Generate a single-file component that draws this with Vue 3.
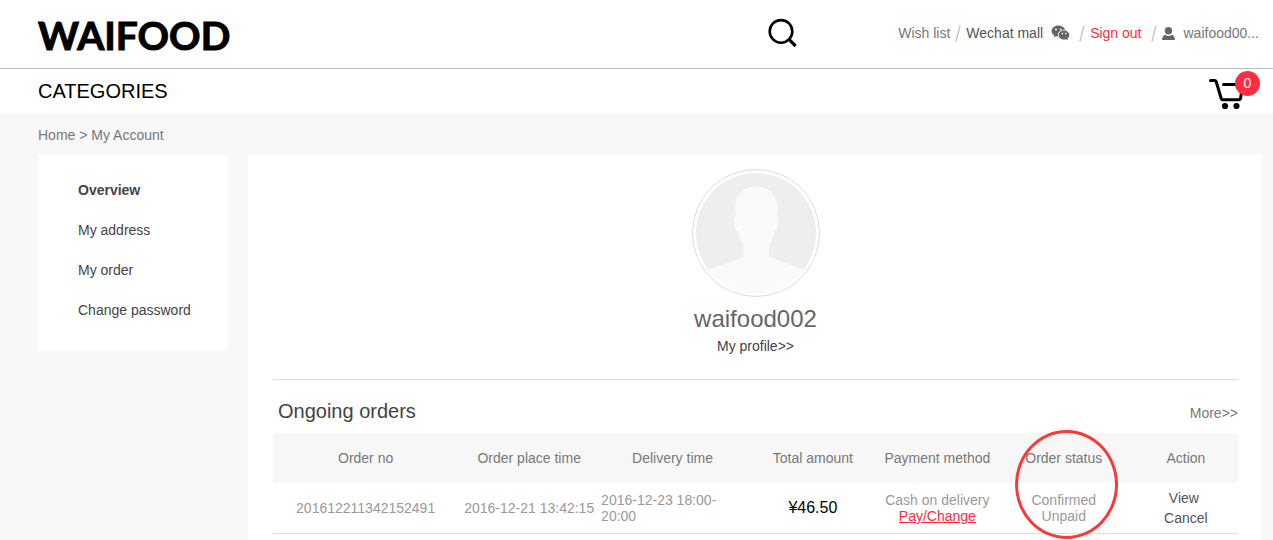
<script setup>
import { ref } from 'vue'

const menu = ref([
  { label: 'Overview', active: true },
  { label: 'My address' },
  { label: 'My order' },
  { label: 'Change password' },
])

const orders = ref([
  {
    no: '201612211342152491',
    placed: '2016-12-21 13:42:15',
    delivery: '2016-12-23 18:00-20:00',
    total: '¥46.50',
    payment: 'Cash on delivery',
    status: ['Confirmed', 'Unpaid'],
  },
])
</script>

<template>
  <div class="page">
    <header class="top">
      <a class="logo" href="#">WAIFOOD</a>
      <button class="search" type="button" aria-label="Search">
        <svg width="30" height="30" viewBox="0 0 30 30" fill="none" stroke="#000">
          <circle cx="13" cy="13.4" r="11.3" stroke-width="2.6" />
          <path d="M21 21.4 L27.6 28" stroke-width="3.2" />
        </svg>
      </button>
      <nav class="links" aria-label="Account">
        <a class="wish" href="#">Wish list</a>
        <svg class="slash" width="6" height="17" viewBox="0 0 6 17"><path d="M5 .5 1 16.5" stroke="#c8c8c8" stroke-width="1.5" /></svg>
        <a class="wechat" href="#">
          <span>Wechat mall</span>
          <svg width="19" height="16" viewBox="0 0 19 16">
            <path fill="#666" d="M7.4.6C3.6.6.6 3 .6 6.1c0 1.800 1 3.300 2.600 4.300l-.7 2 2.400-1.200c.9.200 1.600.4 2.500.4C11.200 11.600 14.200 9.200 14.200 6.100S11.200.6 7.400.6z" />
            <ellipse cx="13" cy="10" rx="6.200" ry="5.300" fill="#fff" />
            <path fill="#666" d="M13 5.400c-3 0-5.300 2-5.300 4.500s2.300 4.600 5.300 4.600c.7 0 1.300-.1 1.900-.3l2 1-.5-1.700c1.200-.8 1.900-2.100 1.900-3.600 0-2.500-2.300-4.500-5.300-4.500z" />
            <g fill="#fff">
              <circle cx="5" cy="4.400" r=".9" />
              <circle cx="9.700" cy="4.400" r=".9" />
              <circle cx="11.300" cy="8.600" r=".8" />
              <circle cx="14.900" cy="8.600" r=".8" />
            </g>
          </svg>
        </a>
        <svg class="slash wide" width="6" height="17" viewBox="0 0 6 17"><path d="M5 .5 1 16.5" stroke="#c8c8c8" stroke-width="1.5" /></svg>
        <a class="signout" href="#">Sign out</a>
        <svg class="slash wide" width="6" height="17" viewBox="0 0 6 17"><path d="M5 .5 1 16.5" stroke="#c8c8c8" stroke-width="1.5" /></svg>
        <a class="user" href="#">
          <svg width="13" height="13" viewBox="0 0 13 13" fill="#666">
            <circle cx="6.500" cy="3.800" r="3.700" />
            <path d="M0 13c.1-2.500 1-4.500 3.100-5.200C4 8.600 5.200 9 6.500 9s2.500-.4 3.400-1.200C12 8.500 12.900 10.500 13 13z" />
          </svg>
          <span>waifood00...</span>
        </a>
      </nav>
    </header>

    <div class="bar">
      <a class="categories" href="#">CATEGORIES</a>
      <button class="cart" type="button" aria-label="Cart">
        <svg width="36" height="32" viewBox="0 0 36 32" fill="none" stroke="#000" stroke-width="3" stroke-linecap="round" stroke-linejoin="round">
          <path d="M2.500 2.500h4.200c.8 0 1.200.4 1.500 1.200l5 16.800c.3.900.8 1.200 1.600 1.200H31c.9 0 1.400-.4 1.600-1.300L34.500 7" />
          <path d="M15.500 6.500H30" />
          <circle cx="17" cy="28" r="3.100" fill="#000" stroke="none" />
          <circle cx="28.500" cy="28" r="3.100" fill="#000" stroke="none" />
        </svg>
        <span class="badge">0</span>
      </button>
    </div>

    <nav class="crumbs" aria-label="Breadcrumb">
      <a href="#">Home</a> &gt; <a href="#">My Account</a>
    </nav>

    <div class="body">
      <aside class="side">
        <ul>
          <li v-for="item in menu" :key="item.label">
            <a href="#" :class="{ active: item.active }">{{ item.label }}</a>
          </li>
        </ul>
      </aside>

      <main class="panel">
        <section class="profile">
          <div class="avatar">
            <svg viewBox="0 0 120 120" aria-hidden="true">
              <defs>
                <clipPath id="disc"><circle cx="60" cy="60" r="60" /></clipPath>
              </defs>
              <g clip-path="url(#disc)">
                <rect width="120" height="120" fill="#eee" />
                <path
                  fill="#fafafa"
                  d="M60 13.500C47 13.500 39 22 39 34c0 3.500.3 6.500.8 9-1.800.8-1.800 3-1.600 6 .3 4.500 1 8.500 3.800 9.200 1 5.500 2.500 10 5.500 13.800V83c-7 4-14 6.500-21 9-5 1.800-9 2-13 4.500L8 120h104l-5-23.500c-4-2.500-8-3-13-5-7-2.700-14-4.500-21-8.500V72c3-3.800 4.500-8.300 5.500-13.800 2.800-.7 3.500-4.700 3.700-9.200.2-3 .2-5.200-1.500-6 .5-2.500.8-5.500.8-9C81.500 22 73 13.500 60 13.500z"
                />
              </g>
            </svg>
          </div>
          <h1>waifood002</h1>
          <a href="#">My profile&gt;&gt;</a>
        </section>

        <section class="orders">
          <div class="heading">
            <h2>Ongoing orders</h2>
            <a href="#">More&gt;&gt;</a>
          </div>
          <table>
            <colgroup>
              <col class="c-no" />
              <col class="c-placed" />
              <col class="c-delivery" />
              <col class="c-total" />
              <col class="c-payment" />
              <col class="c-status" />
              <col class="c-action" />
            </colgroup>
            <thead>
              <tr>
                <th>Order no</th>
                <th>Order place time</th>
                <th>Delivery time</th>
                <th>Total amount</th>
                <th>Payment method</th>
                <th class="status">Order status<span class="ring"></span></th>
                <th>Action</th>
              </tr>
            </thead>
            <tbody>
              <tr v-for="order in orders" :key="order.no">
                <td>{{ order.no }}</td>
                <td>{{ order.placed }}</td>
                <td class="delivery">{{ order.delivery }}</td>
                <td class="total">{{ order.total }}</td>
                <td>{{ order.payment }}<br /><a class="pay" href="#">Pay/Change</a></td>
                <td><div v-for="line in order.status" :key="line">{{ line }}</div></td>
                <td class="actions">
                  <a class="view" href="#">View</a>
                  <a href="#">Cancel</a>
                </td>
              </tr>
            </tbody>
          </table>
        </section>
      </main>
    </div>
  </div>
</template>

<style>
body {
  margin: 0;
}
</style>

<style scoped>
.page {
  display: flex;
  flex-direction: column;
  box-sizing: border-box;
  min-height: 100vh;
  background: #f8f8f8;
  color: #777;
  font: 14px/16px "Liberation Sans", Arial, sans-serif;
}
a {
  color: inherit;
  text-decoration: none;
}
button {
  padding: 0;
  border: 0;
  background: none;
  cursor: pointer;
}
svg {
  display: block;
  flex: none;
}
.top {
  display: flex;
  align-items: center;
  box-sizing: border-box;
  height: 69px;
  padding: 0 14px 2px 38px;
  background: #fff;
  border-bottom: 1px solid #bcbcc0;
}
.logo {
  padding-top: 4px;
  color: #000;
  font: bold 39px/48px Lato, sans-serif;
  -webkit-text-stroke: 1px #000;
}
.search {
  margin-left: auto;
}
.links {
  display: flex;
  align-items: center;
  margin-left: 100px;
  white-space: nowrap;
}
.slash {
  margin: 0 5px;
}
.slash.wide {
  margin-left: 9px;
}
.wechat {
  display: flex;
  align-items: center;
  gap: 8px;
  color: #555;
}
.signout {
  color: #ff2d3f;
}
.user {
  display: flex;
  align-items: center;
  gap: 9px;
}
.bar {
  display: flex;
  align-items: center;
  justify-content: space-between;
  height: 44px;
  padding: 0 29px 0 38px;
  background: #fff;
}
.categories {
  color: #000;
  font-size: 20px;
  line-height: 24px;
}
.cart {
  position: relative;
  margin-top: 6px;
}
.badge {
  position: absolute;
  top: -7px;
  right: -16px;
  width: 25px;
  border-radius: 50%;
  background: #ff2d3f;
  color: #fff;
  font: 14px/25px "Liberation Sans", Arial, sans-serif;
  text-align: center;
}
.crumbs {
  padding: 14px 38px 12px;
}
.body {
  display: flex;
  flex: 1;
  align-items: stretch;
  gap: 20px;
  padding: 0 11px 0 38px;
}
.side {
  flex: none;
  align-self: flex-start;
  box-sizing: border-box;
  width: 190px;
  padding: 15px 0 21px 40px;
  background: #fff;
  color: #444;
}
.side ul {
  margin: 0;
  padding: 0;
  list-style: none;
}
.side li {
  line-height: 40px;
}
.side .active {
  font-weight: bold;
}
.panel {
  flex: 1;
  min-width: 0;
  padding: 14px 24px 0 25px;
  background: #fff;
}
.profile {
  display: flex;
  flex-direction: column;
  align-items: center;
  padding-bottom: 25px;
  border-bottom: 1px solid #ddd;
  color: #444;
}
.avatar {
  box-sizing: border-box;
  width: 128px;
  padding: 3px;
  border: 1px solid #ddd;
  border-radius: 50%;
}
h1 {
  margin: 8px 0 5px;
  color: #666;
  font-size: 24px;
  font-weight: normal;
  line-height: 28px;
}
.heading {
  display: flex;
  align-items: center;
  justify-content: space-between;
  height: 53px;
  padding-left: 5px;
}
.heading a {
  padding-top: 12px;
}
h2 {
  margin: 8px 0 0;
  color: #444;
  font-size: 20px;
  font-weight: normal;
  line-height: 24px;
}
table {
  width: 100%;
  table-layout: fixed;
  border-collapse: collapse;
}
.c-no { width: 19.2%; }
.c-placed { width: 14.7%; }
.c-delivery { width: 15%; }
.c-total { width: 14.1%; }
.c-payment { width: 11.7%; }
.c-status { width: 14.5%; }
.c-action { width: 10.8%; }
th {
  height: 50px;
  padding: 0;
  background: #f7f7f7;
  font-weight: normal;
  text-align: center;
}
.status {
  position: relative;
}
.ring {
  position: absolute;
  top: -3px;
  left: 21px;
  box-sizing: border-box;
  width: 103px;
  height: 109px;
  border: 3px solid #fb3838;
  border-radius: 50%;
  pointer-events: none;
}
td {
  height: 50px;
  padding: 0;
  border-bottom: 1px solid #ddd;
  color: #999;
  text-align: center;
}
.delivery {
  padding-left: 1px;
  text-align: left;
}
.total {
  color: #000;
  font-size: 16px;
}
.pay {
  color: #ff2d3f;
  text-decoration: underline;
}
.actions {
  color: #555;
  line-height: 20px;
}
.actions a {
  display: block;
}
.actions .view {
  padding-right: 4px;
}
</style>
